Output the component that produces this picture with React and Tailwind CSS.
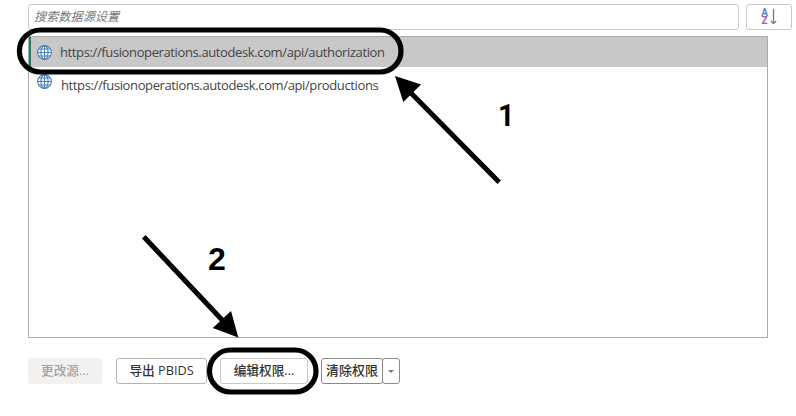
import React from "react";

const FONT = "font-['Open_Sans','Noto_Sans_CJK_SC',sans-serif]";

function Globe() {
  return (
    <svg className="h-[15px] w-[15px] shrink-0" viewBox="0.5 0.5 15 15" fill="none" stroke="#4a7fb8" strokeWidth="1.1">
      <circle cx="8" cy="8" r="6.9" fill="#fff" />
      <ellipse cx="8" cy="8" rx="3.6" ry="6.9" />
      <path d="M8 1v14M1 8h14M2 4.5h12M2 11.5h12" />
    </svg>
  );
}

function SourceRow({ url, selected }) {
  return selected ? (
    <div className="flex h-[30px] items-center border-l-2 border-[#1b7f6b] bg-[#c8c8c8] pl-[6px]">
      <Globe />
      <span className="ml-2 text-[13px] leading-none tracking-[-0.38px] text-[#444]">{url}</span>
    </div>
  ) : (
    <div className="flex h-[30px] items-start pl-2 pt-[7px]">
      <Globe />
      <span className="ml-[9px] mt-[5px] text-[13px] leading-none tracking-[-0.38px] text-[#444]">{url}</span>
    </div>
  );
}

function Annotations() {
  return (
    <svg className="pointer-events-none absolute inset-0" width="796" height="416" viewBox="0 0 796 416" fill="none">
      <g stroke="#000" strokeWidth="5.2">
        <rect x="19.4" y="30" width="381.6" height="42" rx="21" />
        <rect x="209.5" y="350" width="106.5" height="42" rx="21" />
        <path d="M499.2 182.2L408 90M143.8 236.8L225 323" strokeWidth="5" />
      </g>
      <path d="M395 76L421 84.5L403.3 102ZM238.3 337.5L231 311L212.8 328Z" fill="#000" />
    </svg>
  );
}

export default function App() {
  return (
    <div className={`relative h-[416px] w-[796px] overflow-hidden bg-white pl-7 pt-1 text-[#333] ${FONT}`}>
      <div className="flex gap-[7px]">
        <div className="flex h-[26px] w-[711px] items-center rounded-[3px] border border-[#c8c8c8] pl-[5px] pt-px text-[12.2px] italic text-[#777]">
          搜索数据源设置
        </div>
        <div className="flex h-[26px] w-[46px] items-center justify-center rounded-[3px] border border-[#c8c8c8]">
          <div className="flex w-[7px] flex-col items-center font-['Roboto',sans-serif] text-[10px] font-bold leading-[8px]">
            <span className="text-[#4b87c2]">A</span>
            <span className="text-[#9661b5]">Z</span>
          </div>
          <svg className="ml-[2px] h-4 w-[7px]" viewBox="0 0 7 16" fill="none" stroke="#777" strokeWidth="1.3">
            <path d="M3.5 0v14M.8 11.9L3.5 14.5L6.2 11.9" />
          </svg>
        </div>
      </div>

      <div className="mt-[6px] h-[302px] w-[740px] border border-[#aaa]">
        <SourceRow url="https://fusionoperations.autodesk.com/api/authorization" selected />
        <SourceRow url="https://fusionoperations.autodesk.com/api/productions" />
      </div>

      <div className="mt-5 flex h-[26px] text-[12.7px] font-medium">
        <button className="w-[74px] whitespace-nowrap rounded-[3px] bg-[#f2f1f0] text-[#a3a3a3]">更改源...</button>
        <button className="ml-[14px] w-[91px] whitespace-nowrap rounded-[3px] border border-[#b5b5b5]">导出 PBIDS</button>
        <button className="ml-[13px] w-[88px] whitespace-nowrap rounded-[3px] border border-[#c8c8c8]">编辑权限...</button>
        <button className="ml-[13px] w-[62px] whitespace-nowrap rounded-[3px] border border-[#8a8a8a] text-[13px]">清除权限</button>
        <button className="-ml-px flex w-[18px] items-center justify-center rounded-[3px] border border-[#8a8a8a]">
          <span className="border-x-[3px] border-t-[3px] border-x-transparent border-t-[#777]" />
        </button>
      </div>

      <Annotations />
      <span className="absolute left-[497px] top-[99px] origin-center scale-x-90 font-['Roboto',sans-serif] text-[32px] font-bold leading-8 text-black">1</span>
      <span className="absolute left-[208px] top-[243px] font-['Liberation_Sans',sans-serif] text-[32px] font-bold leading-8 text-black">2</span>
    </div>
  );
}
